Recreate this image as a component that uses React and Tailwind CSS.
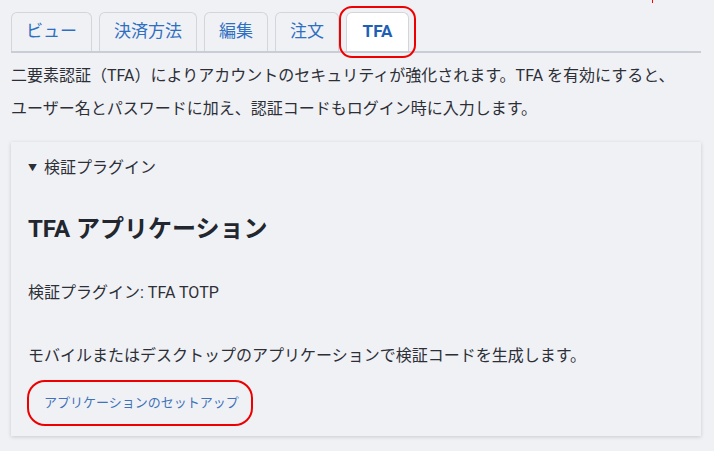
import React from 'react'

const tabs = ['ビュー', '決済方法', '編集', '注文', 'TFA']

export default function App() {
  return (
    <div
      className="relative w-[714px] h-[451px] overflow-hidden bg-[#f0f1f5] text-[#2c2f36]"
      style={{ fontFamily: 'Roboto, "Noto Sans CJK JP", sans-serif' }}
    >
      {/* stray annotation mark */}
      <span className="absolute left-[652px] top-0 w-[1px] h-[3px] bg-[#ff0000]" />

      <div className="pl-[11px] pr-[13px] pt-[12px]">
        <div className="flex gap-[7px] border-b-2 border-[#cbcdd6]">
          {tabs.map((t) => {
            const active = t === 'TFA'
            return (
              <div key={t} className="relative">
                <div
                  className={
                    active
                      ? 'h-[39px] w-[63px] flex items-center justify-center border border-b-0 border-[#d3d5db] rounded-t-[6px] bg-white text-[17px] font-bold text-[#1f5fb5]'
                      : 'h-[39px] px-[14px] flex items-center border border-b-0 border-[#d3d5db] rounded-t-[6px] text-[17px] text-[#2f6fc2]'
                  }
                >
                  {t}
                </div>
                {active && (
                  <span className="absolute left-[-7px] right-[-7px] top-[-6px] bottom-[-7px] border-2 border-[#ee0000] rounded-[13px]" />
                )}
              </div>
            )
          })}
        </div>

        <p className="mt-[6px] text-[16px] leading-[33px] text-[#2c2f36]">
          二要素認証（TFA）によりアカウントのセキュリティが強化されます。TFA を有効にすると、
          <br />
          ユーザー名とパスワードに加え、認証コードもログイン時に入力します。
        </p>

        <div className="mt-[17px] bg-[#f0f1f5] shadow-[0_1px_4px_rgba(0,0,0,0.16)] pl-[17px] pr-4 pt-[14px] pb-[10px]">
          <div className="flex items-center text-[16px] leading-[24px]">
            <span className="text-[9px] mr-[7px]">▼</span>
            検証プラグイン
          </div>
          <h2 className="mt-[35px] text-[24px] font-bold leading-[28px] text-[#22262e]">TFA アプリケーション</h2>
          <p className="mt-[38px] text-[16px] leading-[24px]">検証プラグイン: TFA TOTP</p>
          <p className="mt-[39px] text-[16px] leading-[24px]">モバイルまたはデスクトップのアプリケーションで検証コードを生成します。</p>
          <div className="mt-[12px] ml-[-1px] w-[226px] h-[46px] border-2 border-[#ee0000] rounded-[18px] flex items-center pl-[15px]">
            <span className="text-[13px] whitespace-nowrap text-[#3f72b9]">アプリケーションのセットアップ</span>
          </div>
        </div>
      </div>
    </div>
  )
}
